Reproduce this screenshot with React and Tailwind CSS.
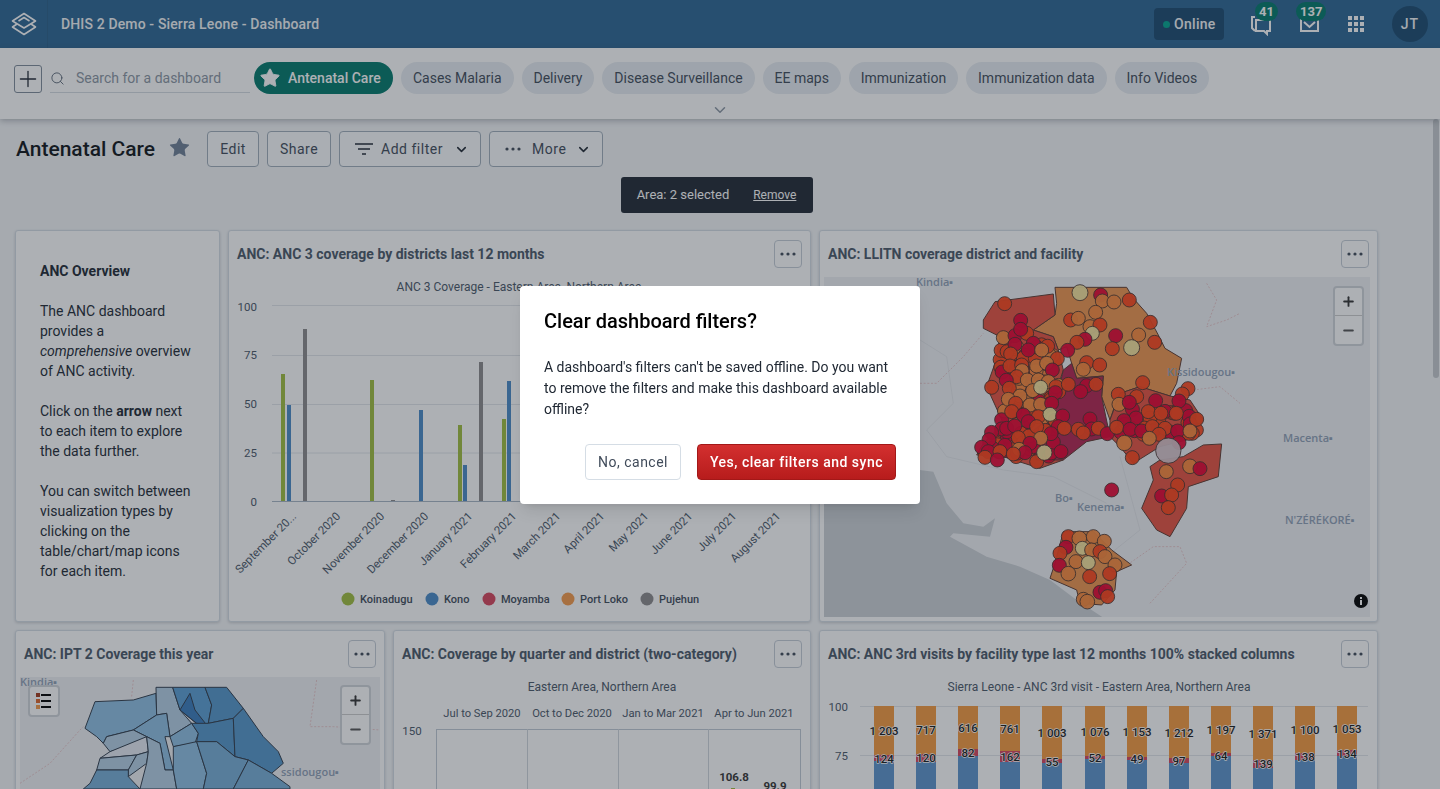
import React from 'react';
import { Plus, Search, Star, ChevronDown, Minus } from 'lucide-react';

const chips = ['Cases Malaria', 'Delivery', 'Disease Surveillance', 'EE maps', 'Immunization', 'Immunization data', 'Info Videos'];

const months = ['September 20...', 'October 2020', 'November 2020', 'December 2020', 'January 2021', 'February 2021', 'March 2021', 'April 2021', 'May 2021', 'June 2021', 'July 2021', 'August 2021'];

const bars = [
  [281, 374, '#a0bf3e'], [287, 405, '#4a8bc8'], [303, 329, '#8c8a8c'],
  [370, 380, '#a0bf3e'], [391, 500, '#8c8a8c'], [419, 410, '#4a8bc8'],
  [458, 425, '#a0bf3e'], [463, 465, '#4a8bc8'], [479, 362, '#8c8a8c'],
  [502, 419, '#a0bf3e'], [507, 381, '#4a8bc8'],
];

const legend = [
  ['Koinadugu', '#a0bf3e'], ['Kono', '#4a8bc8'], ['Moyamba', '#d8455d'], ['Port Loko', '#f59a4a'], ['Pujehun', '#8c8a8c'],
];

const columns = [
  ['1 203', 731, '124', 759, 755, 761], ['717', 730, '120', 758, 754, 762], ['616', 728, '82', 753, 749, 756],
  ['761', 729, '162', 757, 751, 762], ['1 003', 733, '55', 762, 759, 763], ['1 076', 732, '52', 758, 756, 759],
  ['1 153', 732, '49', 759, 757, 760], ['1 212', 733, '97', 761, 758, 763], ['1 197', 730, '64', 756, 753, 756],
  ['1 371', 734, '139', 764, 760, 768], ['1 100', 730, '138', 757, 753, 760], ['1 053', 729, '134', 754, 750, 756],
];

const dots = { d: '#e60030', r: '#ff4318', o: '#fb8a3c', y: '#f5e6a0', g: '#d8c4ca' };

// dense facility clusters, same result on every render
const cluster = (n, x0, y0, w, h, seed, types) => {
  let s = seed;
  const next = () => {
    s = (s * 9301 + 49297) % 233280;
    return s / 233280;
  };
  return Array.from({ length: n }).map(() => [x0 + next() * w, y0 + next() * h, types[Math.floor(next() * types.length)]]);
};

const circles = [
  ...cluster(60, 240, 200, 180, 300, 17, 'drrdoo'),
  ...cluster(22, 200, 470, 220, 90, 41, 'drrd'),
  ...cluster(26, 590, 410, 240, 90, 73, 'drrd'),
  [480, 68, 'y', 24], [542, 75, 'd'], [547, 93, 'o'], [582, 96, 'o'], [628, 90, 'r'], [527, 127, 'o'], [254, 101, 'r'],
  [452, 150, 'r'], [475, 145, 'o'], [302, 151, 'd'], [510, 170, 'o'], [540, 165, 'r'], [517, 190, 'y'], [691, 157, 'r'],
  [587, 197, 'd'], [656, 195, 'o'], [495, 208, 'd'], [471, 217, 'r'], [704, 217, 'r'], [635, 233, 'y', 24], [577, 236, 'r'],
  [443, 241, 'd'], [250, 203, 'o'], [285, 197, 'd'], [320, 190, 'r'], [302, 178, 'd'], [285, 223, 'd'], [340, 220, 'd'],
  [325, 240, 'd'], [272, 252, 'r'], [365, 240, 'o'], [412, 266, 'r'], [500, 278, 'r'], [490, 298, 'o'], [539, 285, 'r'],
  [270, 288, 'r'], [305, 285, 'r'], [350, 288, 'o'], [380, 280, 'o'], [397, 300, 'd'], [306, 302, 'o'], [290, 320, 'r'],
  [259, 331, 'd'], [215, 352, 'r'], [268, 355, 'r'], [322, 330, 'o'], [355, 330, 'o'], [385, 335, 'o'], [408, 350, 'r'],
  [445, 343, 'r'], [500, 347, 'd'], [528, 343, 'r'], [482, 365, 'd'], [338, 362, 'o'], [362, 352, 'y'], [406, 368, 'd'],
  [300, 378, 'o'], [265, 388, 'o'], [287, 400, 'r'], [330, 405, 'o'], [362, 403, 'o'], [395, 400, 'd'], [275, 425, 'r'],
  [310, 435, 'd'], [355, 440, 'r'], [390, 433, 'y'], [428, 438, 'd'], [325, 455, 'd'], [260, 475, 'd'], [284, 468, 'd'],
  [350, 470, 'r'], [415, 470, 'd'], [433, 475, 'r'], [475, 478, 'r'], [510, 447, 'd'], [515, 477, 'd'], [535, 475, 'r'],
  [490, 489, 'r'], [562, 491, 'd'], [393, 491, 'd'], [362, 505, 'o'], [295, 503, 'r'], [330, 520, 'd'], [185, 532, 'd'],
  [205, 545, 'd'], [255, 526, 'd'], [240, 545, 'r'], [297, 538, 'o'], [315, 548, 'd'], [195, 562, 'r'], [232, 570, 'd'],
  [280, 552, 'r'], [350, 575, 'r'], [373, 548, 'y', 23], [423, 545, 'd'], [668, 338, 'r'], [595, 373, 'r'], [650, 380, 'r'],
  [597, 403, 'o'], [628, 397, 'd'], [707, 392, 'd'], [804, 356, 'r'], [787, 372, 'r'], [777, 393, 'd'], [685, 425, 'r'],
  [723, 430, 'r'], [769, 430, 'r'], [830, 448, 'r'], [648, 444, 'd'], [612, 452, 'd'], [590, 472, 'r'], [630, 478, 'd'],
  [665, 483, 'd'], [697, 470, 'r'], [735, 475, 'r'], [773, 483, 'd'], [810, 483, 'o'], [717, 493, 'r'], [688, 505, 'o'],
  [613, 519, 'o', 23], [777, 518, 'd'], [637, 563, 'r'], [745, 542, 'g', 38], [810, 589, 'o', 22], [840, 596, 'd'],
  [739, 605, 'o'], [773, 645, 'r'], [725, 678, 'd'], [755, 675, 'r'], [745, 713, 'r'], [575, 660, 'd'], [445, 800, 'r'],
  [478, 805, 'o', 22], [520, 800, 'o'], [553, 814, 'o'], [438, 832, 'd'], [420, 850, 'r'], [487, 835, 'y'], [515, 840, 'o'],
  [540, 845, 'r'], [555, 860, 'o'], [468, 875, 'o'], [505, 878, 'y'], [585, 885, 'o'], [418, 886, 'd'], [445, 911, 'o', 22],
  [509, 920, 'r'], [569, 911, 'r'], [540, 967, 'd'], [557, 962, 'd'], [563, 980, 'r'], [490, 988, 'o'], [502, 995, 'o', 22],
];

const regions = [
  ['405,52 620,52 640,85 680,130 715,195 735,235 785,265 770,340 750,378 660,350 600,370 580,420 570,450 545,380 550,318 470,325 455,280 440,230 415,240 400,200 340,180 405,135 410,100', '#f0964e'],
  ['190,150 225,95 400,72 405,135 340,180 400,200 415,240 430,300 415,345 430,395 420,450 430,570 360,595 250,560 170,555 190,520 250,460 200,350 225,280 240,200 190,175', '#e85240'],
  ['430,300 455,280 470,325 550,318 545,380 570,500 500,515 430,570 350,570 320,500 400,430', '#b42450'],
  ['570,450 600,370 660,350 750,378 810,390 850,450 800,510 720,530 640,580 600,530 570,500', '#e85240'],
  ['850,525 905,522 895,620 805,650 800,715 750,800 710,780 665,715 700,630 690,590 720,570 790,560', '#e85240'],
  ['430,785 520,785 575,840 635,885 590,905 585,960 545,1005 480,1000 470,960 390,925 405,880', '#f0964e'],
];

const blues = [
  ['255,295 285,215 400,210 468,190 470,255 400,300 320,320 310,340 290,320', '#8fc0e4'],
  ['468,172 518,172 540,240 575,280 510,320 500,250 470,255', '#b5d0e6'],
  ['518,172 615,172 635,225 625,280 595,285 540,240', '#5b9fd4'],
  ['615,172 680,172 730,235 700,265 625,280 635,225', '#5597cb'],
  ['570,190 585,240 620,285 590,280 540,240', '#3a7cbd'],
  ['400,300 470,255 500,250 510,320 495,320 520,420 495,420 480,340 440,320', '#8fc0e4'],
  ['510,320 575,280 595,310 585,340 520,350', '#8fc0e4'],
  ['575,280 625,280 700,265 705,380 650,335 590,335 595,310', '#5597cb'],
  ['700,265 730,235 790,320 835,365 850,400 815,430 745,390 705,380', '#5597cb'],
  ['310,340 320,320 400,300 440,320 420,340 330,365', '#b5d0e6'],
  ['330,365 440,320 445,365 410,375 300,385', '#e6ebf4'],
  ['300,385 410,375 385,420 290,420', '#b5d0e6'],
  ['410,375 445,365 440,400 385,440 385,420', '#b5d0e6'],
  ['440,320 480,340 495,420 520,420 530,477 420,477 440,400 445,365', '#b5d0e6'],
  ['520,350 590,335 620,430 610,477 530,477 520,420', '#8fc0e4'],
  ['590,335 650,335 705,380 745,390 700,477 610,477 620,430', '#78aed7'],
  ['745,390 815,430 870,470 870,477 700,477', '#78aed7'],
  ['250,477 270,460 290,420 385,420 385,440 420,477', '#78aed7'],
];

const Dots = ({ className }) => (
  <svg width="16" height="4" viewBox="0 0 16 4" className={className}>
    <circle cx="2" cy="2" r="1.6" fill="currentColor" />
    <circle cx="8" cy="2" r="1.6" fill="currentColor" />
    <circle cx="14" cy="2" r="1.6" fill="currentColor" />
  </svg>
);

const Button = ({ children, className = '' }) => (
  <button className={`h-9 rounded-[4px] border border-[#a0adba] bg-[#fbfcfd] flex items-center text-sm tracking-[0.5px] text-[#404b5a] ${className}`}>
    {children}
  </button>
);

const Card = ({ title, className = '', children }) => (
  <div className={`h-[392px] shrink-0 overflow-hidden rounded-[3px] border border-[#d5dde5] bg-white shadow-[0_1px_3px_rgba(33,41,52,0.2)] ${className}`}>
    <div className="h-[46px] pl-2 pr-2 flex items-center justify-between">
      <span className="text-sm font-bold text-[#4a5768] whitespace-nowrap">{title}</span>
      <div className="w-7 h-7 rounded-[4px] border border-[#c4cdd6] flex items-center justify-center text-[#404b5a]">
        <Dots />
      </div>
    </div>
    {children}
  </div>
);

const ZoomControl = ({ className = '' }) => (
  <div className={`absolute w-[31px] h-[60px] rounded-[4px] border-2 border-[#d0d4d9] bg-white flex flex-col items-center justify-center text-[#333] ${className}`}>
    <div className="h-[29px] w-full flex items-center justify-center border-b border-[#ccc]">
      <Plus size={15} strokeWidth={3} />
    </div>
    <div className="h-[29px] flex items-center justify-center text-[#555]">
      <Minus size={15} strokeWidth={3} />
    </div>
  </div>
);

const AncBars = () => (
  <svg viewBox="228 277 583 345" width="583" height="345" className="block -ml-px">
    <text x="519" y="291" textAnchor="middle" fontSize="12" fill="#4a5768">ANC 3 Coverage - Eastern Area, Northern Area</text>
    {[[100, 305.5, 311], [75, 355.5, 359], [50, 404.5, 408], [25, 453, 457], [0, 501.5, 506]].map(([label, y, textY]) => (
      <g key={label}>
        <line x1="272" x2="800" y1={y} y2={y} stroke={label === 0 ? '#a9b6c4' : '#e2e6ea'} />
        <text x="257" y={textY} textAnchor="end" fontSize="11.5" fill="#4a5768">{label}</text>
      </g>
    ))}
    {bars.map(([x, top, fill]) => (
      <rect key={`${x}-${top}`} x={x} y={top} width="4" height={501 - top} fill={fill} />
    ))}
    {months.map((m, i) => (
      <text key={m} x={297 + i * 44} y="517" textAnchor="end" fontSize="11.5" fill="#4a5768" transform={`rotate(-45 ${297 + i * 44} 517)`}>{m}</text>
    ))}
    {legend.map(([name, fill], i) => {
      const cx = [348, 432, 489, 568, 647][i];
      return (
        <g key={name}>
          <circle cx={cx} cy="599" r="6.5" fill={fill} />
          <text x={cx + 12} y="603" fontSize="11" fontWeight="500" fill="#404b5a">{name}</text>
        </g>
      );
    })}
  </svg>
);

const DistrictMap = () => (
  <div className="relative mx-1 h-[340px] overflow-hidden">
    <svg viewBox="824 277 546 340" width="546" height="340" className="block">
      <rect x="824" y="277" width="546" height="340" fill="#f0f1f4" />
      <g transform="translate(920 270) scale(0.3333)">
        <polygon points="-300,540 -100,560 0,600 40,605 80,700 130,760 190,770 225,745 210,800 100,790 90,800 200,860 300,890 390,930 470,990 560,1050 -300,1050" fill="#ccd1d6" />
        <polyline points="0,340 50,340 130,260 190,190" fill="none" stroke="#e8c8cb" strokeWidth="3" strokeDasharray="6 5" />
        <polyline points="860,40 890,90 860,170 920,150 960,130" fill="none" stroke="#e8c8cb" strokeWidth="3" strokeDasharray="6 5" />
        <polyline points="690,1000 800,880 780,830 700,830 600,900" fill="none" stroke="#e8c8cb" strokeWidth="3" strokeDasharray="6 5" />
        <polyline points="820,360 900,350 960,400" fill="none" stroke="#e8c8cb" strokeWidth="3" strokeDasharray="6 5" />
        <polyline points="0,210 80,260 100,400 20,480 80,560 250,600 400,620 560,700" fill="none" stroke="#dde0e4" strokeWidth="2" />
        <polyline points="600,560 660,780 560,860" fill="none" stroke="#dde0e4" strokeWidth="2" />
        {regions.map(([points, fill]) => (
          <polygon key={points} points={points} fill={fill} stroke="#5c3a30" strokeWidth="3" />
        ))}
        {circles.map(([x, y, type, r], i) => (
          <circle key={i} cx={x} cy={y} r={r || 21} fill={dots[type]} fillOpacity="0.95" stroke="#43302b" strokeWidth="2.5" />
        ))}
      </g>
      <g fontSize="11" fontWeight="600" fill="#8fa0b6" style={{ fontFamily: '"Open Sans", sans-serif' }}>
        <text x="916" y="286">Kindia▪</text>
        <text x="1167" y="376">Kissidougou▪</text>
        <text x="1283" y="442">Macenta▪</text>
        <text x="1055" y="502">Bo▪</text>
        <text x="1077" y="511">Kenema▪</text>
        <text x="1285" y="524">N'ZÉRÉKORÉ▪</text>
      </g>
    </svg>
    <ZoomControl className="top-[9px] right-[9px]" />
    <svg width="14" height="14" viewBox="0 0 14 14" className="absolute right-[5px] bottom-[9px]">
      <circle cx="7" cy="7" r="7" fill="#000" />
      <rect x="6" y="6" width="2" height="5" fill="#fff" />
      <rect x="6" y="3" width="2" height="2" fill="#fff" />
    </svg>
  </div>
);

const BlueMap = () => (
  <div className="relative mx-1 h-[340px] overflow-hidden">
    <svg viewBox="20 677 360 340" width="360" height="340" className="block">
      <rect x="20" y="677" width="360" height="340" fill="#f0f1f4" />
      <g transform="translate(0 630) scale(0.3333)">
        <polyline points="60,460 150,400 240,300 250,290" fill="none" stroke="#e8c8cb" strokeWidth="3" strokeDasharray="6 5" />
        <polyline points="950,150 930,290 1000,290 1140,300" fill="none" stroke="#e8c8cb" strokeWidth="3" strokeDasharray="6 5" />
        <polyline points="400,150 395,200" fill="none" stroke="#e8c8cb" strokeWidth="3" strokeDasharray="6 5" />
        {blues.map(([points, fill]) => (
          <polygon key={points} points={points} fill={fill} stroke="#2f3c4c" strokeWidth="3" />
        ))}
      </g>
      <g fontSize="11" fontWeight="600" fill="#8fa0b6" style={{ fontFamily: '"Open Sans", sans-serif' }}>
        <text x="20" y="686">Kindia▪</text>
        <text x="281" y="776">ssidougou▪</text>
      </g>
    </svg>
    <div className="absolute left-[8px] top-[8px] w-8 h-8 rounded-[4px] border-2 border-[#d0d4d9] bg-white flex flex-col justify-center gap-[2px] pl-[6px]">
      {['#a33a1a', '#e0662a', '#f59a4a'].map((c) => (
        <div key={c} className="flex items-center gap-[1px]">
          <div className="w-[4px] h-[4px]" style={{ backgroundColor: c }} />
          <div className="w-[10px] h-[1.5px] bg-black" />
        </div>
      ))}
    </div>
    <ZoomControl className="top-[8px] right-[9px]" />
  </div>
);

const QuarterChart = () => (
  <svg viewBox="394 677 416 340" width="416" height="340" className="block">
    <text x="602" y="691" textAnchor="middle" fontSize="12" fill="#4a5768">Eastern Area, Northern Area</text>
    {[['Jul to Sep 2020', 482], ['Oct to Dec 2020', 572], ['Jan to Mar 2021', 663], ['Apr to Jun 2021', 754]].map(([label, x]) => (
      <text key={label} x={x} y="717" textAnchor="middle" fontSize="11.2" fill="#4a5768">{label}</text>
    ))}
    <text x="412" y="735" textAnchor="middle" fontSize="11.5" fill="#4a5768">150</text>
    <rect x="436.5" y="729.5" width="364" height="300" fill="none" stroke="#c0c9d4" />
    {[527.5, 618.5, 708.5].map((x) => (
      <line key={x} x1={x} x2={x} y1="729" y2="1030" stroke="#d0d6dd" />
    ))}
    <text x="734" y="781" textAnchor="middle" fontSize="11.5" fontWeight="700" fill="#333">106.8</text>
    <text x="775" y="790" textAnchor="middle" fontSize="11.5" fontWeight="700" fill="#333">99.9</text>
    <rect x="731" y="788" width="4" height="4" fill="#a0bf3e" />
  </svg>
);

const StackedChart = () => (
  <svg viewBox="820 677 557 340" width="557" height="340" className="block">
    <text x="1099" y="691" textAnchor="middle" fontSize="12" fill="#4a5768">Sierra Leone - ANC 3rd visit - Eastern Area, Northern Area</text>
    {[[100, 706.5], [75, 755.5]].map(([label, y]) => (
      <g key={label}>
        <line x1="860" x2="1368" y1={y} y2={y} stroke="#e2e6ea" />
        <text x="848" y={y + 4} textAnchor="end" fontSize="11.5" fill="#4a5768">{label}</text>
      </g>
    ))}
    {columns.map(([top, topY, mid, midY, redTop, blueTop], i) => {
      const x = 874 + Math.round(i * 42.1);
      return (
        <g key={i}>
          <rect x={x} y="706" width="20" height={redTop - 706} fill="#f59a3e" />
          <rect x={x} y={redTop} width="20" height={blueTop - redTop} fill="#d8455d" />
          <rect x={x} y={blueTop} width="20" height="120" fill="#5d94cc" />
          <g textAnchor="middle" fontSize="11.5" fontWeight="500" fill="#1a1a1a" stroke="#fff" strokeWidth="1.4" strokeLinejoin="round" paintOrder="stroke">
            <text x={x + 10} y={topY + 4}>{top}</text>
            <text x={x + 10} y={midY + 4}>{mid}</text>
          </g>
        </g>
      );
    })}
  </svg>
);

export default function App() {
  return (
    <div className="relative h-screen overflow-hidden flex flex-col bg-[#f4f6f8] text-[#212934] [font-family:Roboto,sans-serif]">
      <header className="h-12 shrink-0 flex items-center bg-[#2c6693] text-white">
        <div className="w-12 h-12 flex items-center justify-center border-r border-[#2a5f89]">
          <svg width="28" height="24" viewBox="0 0 28 24" fill="none" stroke="#fff" strokeWidth="1.6" strokeLinejoin="round">
            <path d="M14 1.5 25.5 9 14 16 2.5 9Z" />
            <path d="M7 12 2.5 15 14 22.5 25.5 15 21 12" />
            <path d="M8.5 9 14 5.5 19.5 9" />
          </svg>
        </div>
        <span className="ml-[13px] text-sm font-medium tracking-[0.14px] text-[#f4f6f8]">DHIS 2 Demo - Sierra Leone - Dashboard</span>
        <div className="ml-auto flex items-center">
          <div className="h-8 w-[70px] rounded-[4px] bg-[#1a4a70] flex items-center pl-[9px] gap-[4px] text-sm font-medium tracking-[0.3px] text-[#f4f6f8]">
            <span className="w-[7px] h-[7px] rounded-full bg-[#00a58f]" />
            Online
          </div>
          <div className="relative ml-[26px] w-6 h-6">
            <svg width="24" height="24" viewBox="0 0 24 24" fill="none" stroke="#fff" strokeWidth="2">
              <path d="M5 5H2v11l3 3" />
              <path d="M6 8h14v11h-3v3l-3-3H6Z" />
            </svg>
            <span className="absolute -top-[10px] left-[5px] h-[19px] min-w-[22px] rounded-full bg-[#00796b] px-1 flex items-center justify-center text-[13px] font-bold text-white leading-none">41</span>
          </div>
          <div className="relative ml-[24px] w-6 h-6">
            <svg width="24" height="24" viewBox="0 0 24 24" fill="none" stroke="#fff" strokeWidth="2">
              <path d="M3 6v13h17V6" />
              <path d="m6 10 5.500 5 5.500-5" />
            </svg>
            <span className="absolute -top-[10px] -left-[2px] h-[19px] min-w-[30px] rounded-full bg-[#00796b] px-1 flex items-center justify-center text-[13px] font-bold text-white leading-none">137</span>
          </div>
          <div className="ml-[26px] grid grid-cols-3 gap-[2px]">
            {Array.from({ length: 9 }).map((_, i) => (
              <span key={i} className="w-[4px] h-[4px] bg-white" />
            ))}
          </div>
          <div className="ml-[28px] mr-3 w-9 h-9 rounded-full bg-[#1a4a70] flex items-center justify-center text-sm font-medium tracking-[1px] text-[#f4f6f8]">JT</div>
        </div>
      </header>

      <div className="relative z-10 h-[71px] shrink-0 bg-white shadow-[0_2px_6px_rgba(33,41,52,0.3)]">
        <div className="flex items-start pt-[14px] pl-[14px]">
          <div className="mt-[3px] w-7 h-7 rounded-[3px] border border-[#7f8c9a] flex items-center justify-center text-[#212934]">
            <Plus size={28} strokeWidth={1.2} />
          </div>
          <div className="ml-2 h-[31px] w-[200px] flex items-center border-b border-[#d5dbe1] pt-[2px] text-[#7f8c9a]">
            <Search size={15} strokeWidth={1.5} className="text-[#5a6675]" />
            <span className="ml-[11px] text-sm text-[#8b96a3]">Search for a dashboard</span>
          </div>
          <div className="ml-1 h-8 w-[139px] rounded-full bg-[#00796b] flex items-center pl-[5px] gap-[7px] text-sm font-medium text-white">
            <Star size={22} fill="#fff" strokeWidth={1} />
            Antenatal Care
          </div>
          <div className="ml-2 flex gap-2">
            {chips.map((chip) => (
              <div key={chip} className="h-8 px-[11.93px] rounded-full bg-[#e8edf2] flex items-center text-sm text-[#404b5a] whitespace-nowrap">{chip}</div>
            ))}
          </div>
        </div>
        <ChevronDown size={18} className="absolute left-[711px] top-[53px] text-[#8b96a3]" />
      </div>

      <div className="flex-1 min-h-0 flex">
        <main className="flex-1 min-w-0 px-[15px] pt-3 overflow-hidden">
          <div className="flex items-center h-9">
            <h1 className="ml-px mt-[2px] text-[21px] font-medium text-[#0f1419]">Antenatal Care</h1>
            <Star size={23} fill="#6e7f96" strokeWidth={0} className="ml-[13px] -mt-1 text-[#6e7f96]" />
            <Button className="ml-[16px] w-[52px] justify-center">Edit</Button>
            <Button className="ml-2 w-[64px] justify-center">Share</Button>
            <Button className="ml-2 w-[142px] pl-[15px]">
              <svg width="18" height="14" viewBox="0 0 18 14" stroke="#212934" strokeWidth="1.5">
                <path d="M0 2h18M3 7h12M7 12h4" />
              </svg>
              <span className="ml-2">Add filter</span>
              <ChevronDown size={15} strokeWidth={2.5} className="ml-[11px] text-[#212934]" />
            </Button>
            <Button className="ml-2 w-[114px] pl-[15px]">
              <Dots className="text-[#404b5a]" />
              <span className="ml-[11px]">More</span>
              <ChevronDown size={15} strokeWidth={2.5} className="ml-[10px] text-[#212934]" />
            </Button>
          </div>

          <div className="mt-[10px] flex justify-center">
            <div className="h-9 w-[192px] rounded-[3px] bg-[#212934] flex items-center justify-center gap-6 text-white">
              <span className="text-[13px]">Area: 2 selected</span>
              <span className="text-xs underline">Remove</span>
            </div>
          </div>

          <div className="mt-[17px] flex flex-col gap-2">
            <div className="flex gap-2">
              <div className="w-[205px] h-[392px] shrink-0 rounded-[3px] border border-[#d5dde5] bg-white shadow-[0_1px_3px_rgba(33,41,52,0.2)] pl-6 pr-6 pt-[30px] text-sm leading-5 text-[#212934]">
                <p className="font-bold">ANC Overview</p>
                <p className="mt-5">The ANC dashboard provides a <em>comprehensive</em> overview of ANC activity.</p>
                <p className="mt-5">Click on the <b>arrow</b> next to each item to explore the data further.</p>
                <p className="mt-5">You can switch between visualization types by clicking on the table/chart/map icons for each item.</p>
              </div>
              <Card title="ANC: ANC 3 coverage by districts last 12 months" className="w-[583px]">
                <AncBars />
              </Card>
              <Card title="ANC: LLITN coverage district and facility" className="w-[559px]">
                <DistrictMap />
              </Card>
            </div>
            <div className="flex gap-2">
              <Card title="ANC: IPT 2 Coverage this year" className="w-[370px]">
                <BlueMap />
              </Card>
              <Card title="ANC: Coverage by quarter and district (two-category)" className="w-[418px]">
                <QuarterChart />
              </Card>
              <Card title="ANC: ANC 3rd visits by facility type last 12 months 100% stacked columns" className="w-[559px]">
                <StackedChart />
              </Card>
            </div>
          </div>
        </main>
        <div className="w-[7px] shrink-0 bg-[#f4f6f8]">
          <div className="h-[259px] w-[6px] rounded-full bg-[#c6cace]" />
        </div>
      </div>

      <div className="fixed inset-0 z-20 bg-[rgba(33,41,52,0.37)] flex items-center justify-center">
        <div className="w-[400px] rounded-[4px] bg-white p-6 shadow-lg">
          <h2 className="text-xl font-medium leading-[22px] text-black">Clear dashboard filters?</h2>
          <p className="mt-[25px] text-sm leading-[21px] text-[#212934]">
            A dashboard's filters can't be saved offline. Do you want to remove the filters and make this dashboard available offline?
          </p>
          <div className="mt-6 flex justify-end gap-4">
            <button className="h-9 w-[96px] rounded-[4px] border border-[#d5dde5] bg-white text-sm tracking-[0.5px] text-[#404b5a]">No, cancel</button>
            <button className="h-9 w-[199px] rounded-[4px] border border-[#a31818] bg-gradient-to-b from-[#d32f2f] to-[#b71c1c] text-sm font-medium tracking-[0.5px] text-white">Yes, clear filters and sync</button>
          </div>
        </div>
      </div>
    </div>
  );
}
